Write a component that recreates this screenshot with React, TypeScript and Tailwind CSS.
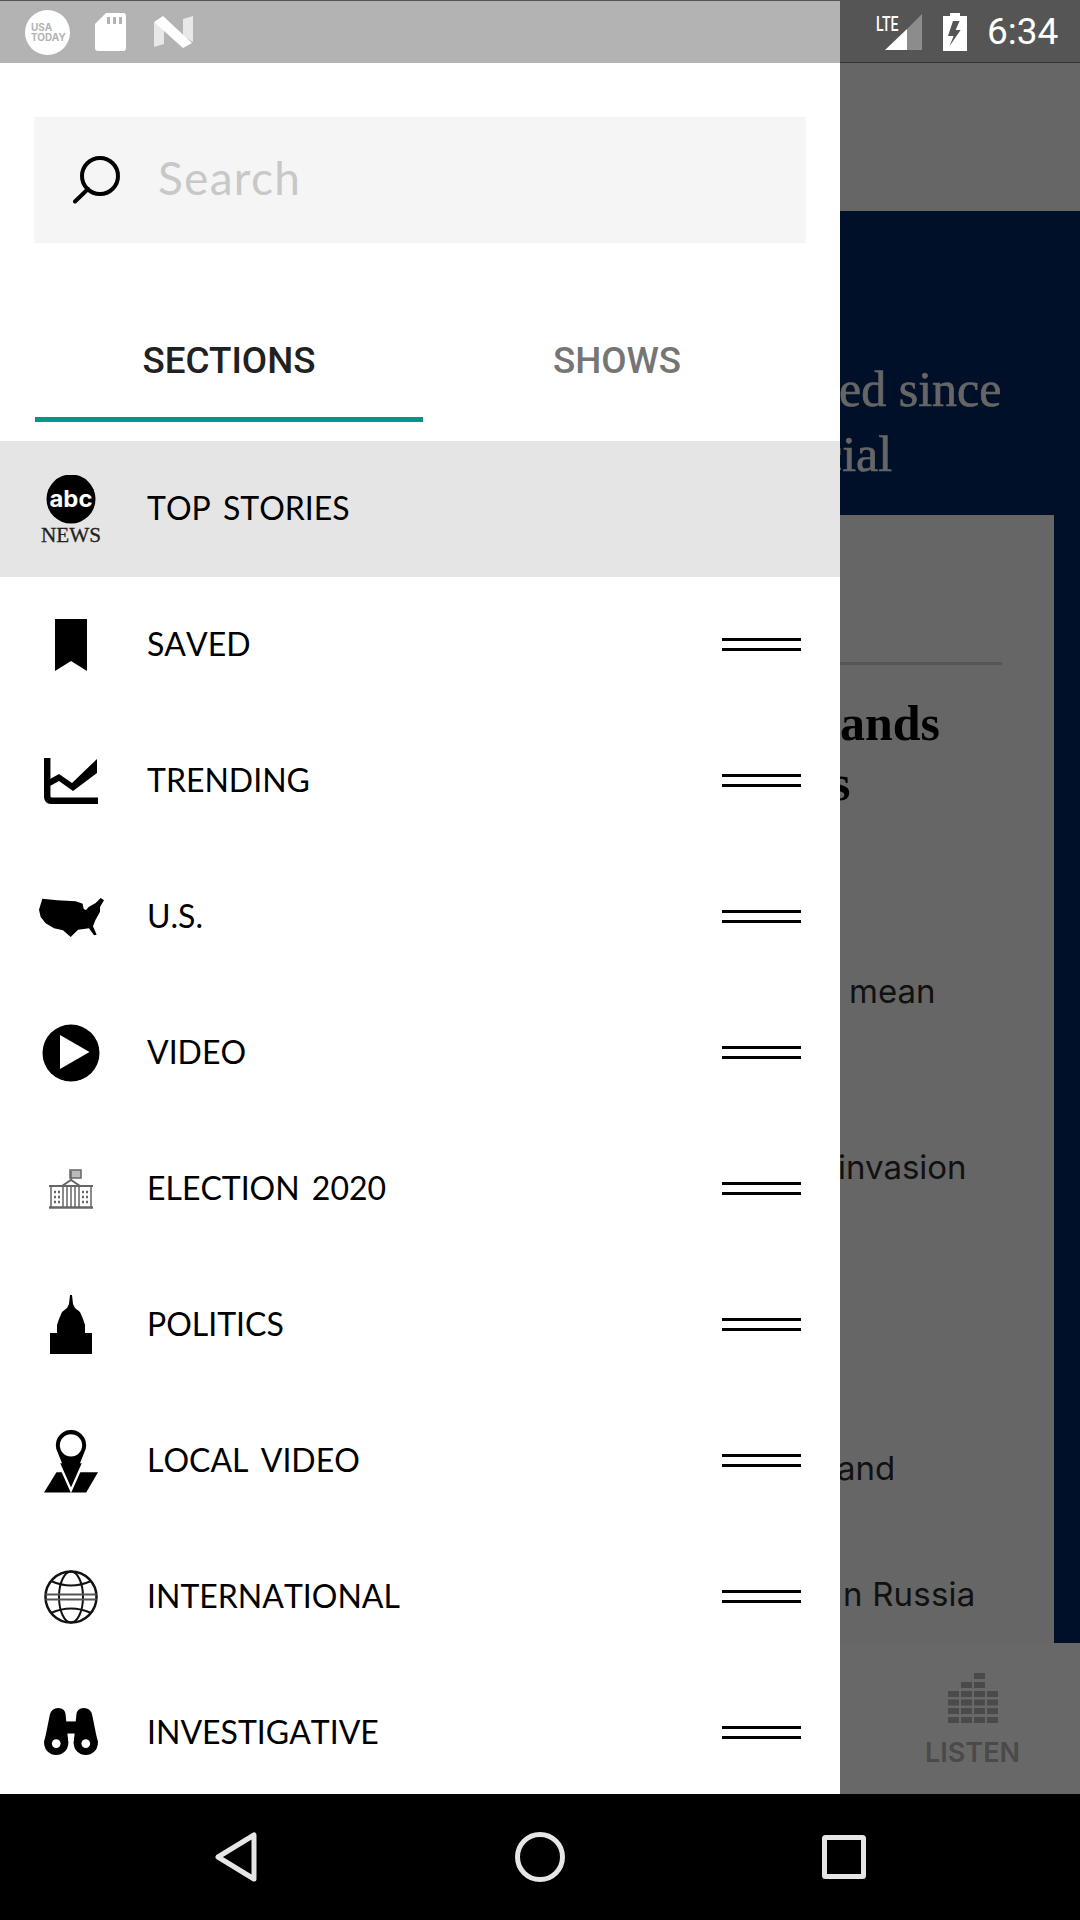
import React from 'react';

const AbcIcon = () => (
  <svg width="64" height="68" viewBox="0 0 64 68">
    <circle cx="32" cy="24" r="24.5" fill="#000" />
    <text x="32" y="32" textAnchor="middle" fontFamily="Inter, sans-serif" fontWeight="700" fontSize="23" fill="#fff" textLength="43" lengthAdjust="spacingAndGlyphs">abc</text>
    <text x="32" y="67" textAnchor="middle" fontFamily="'Liberation Serif', serif" fontSize="21" fill="#222" stroke="#222" strokeWidth="0.3" textLength="60" lengthAdjust="spacingAndGlyphs">NEWS</text>
  </svg>
);

const BookmarkIcon = () => (
  <svg width="32" height="52" viewBox="0 0 32 52">
    <path d="M0 0H32V52L16 42L0 52Z" fill="#000" />
  </svg>
);

const TrendIcon = () => (
  <svg width="54" height="46" viewBox="0 0 54 46">
    <path d="M3.2 0V38Q3.2 42.8 8 42.8H54" fill="none" stroke="#000" strokeWidth="6.5" />
    <path d="M6 21L15 16L28 25L53 1V15L29 33L15 23L6 28Z" fill="#000" />
  </svg>
);

const UsMapIcon = () => (
  <svg width="65" height="39" viewBox="55 55 195 117">
    <path d="M65 57L110 62L165 65L186 72L189 88L196 91L204 82L225 70L240 55L250 62L238 82L238 96L224 122L217 140L228 165L220 167L205 146L172 150L150 172L127 152L100 146L75 131L60 112L55 90Z" fill="#000" />
  </svg>
);

const PlayIcon = () => (
  <svg width="58" height="58" viewBox="0 0 58 58">
    <circle cx="29" cy="29" r="28.5" fill="#000" />
    <path d="M18 11L47.5 28L18 45Z" fill="#fff" />
  </svg>
);

const WhiteHouseIcon = () => (
  <svg width="46" height="40" viewBox="0 0 46 40" fill="none" stroke="#666">
    <rect x="22" y="1" width="11" height="8" fill="#bbb" stroke="#666" strokeWidth="1.5" />
    <path d="M23 2V12" strokeWidth="1.5" />
    <path d="M14 17L23 11L32 17" strokeWidth="2" />
    <path d="M1 17H45" strokeWidth="2" />
    <path d="M3 17V38M43 17V38M15 17V38M19 17V38M23 17V38M27 17V38M31 17V38" strokeWidth="1.5" />
    <path d="M1 38.5H45" strokeWidth="2.5" />
    <path d="M6 23H12M6 28H12M6 33H12M34 23H40M34 28H40M34 33H40" strokeWidth="2.5" strokeDasharray="2 2" />
  </svg>
);

const CapitolIcon = () => (
  <svg width="42" height="60" viewBox="0 0 42 60">
    <path d="M20 0H22L23 9L25 13L30 17L33 24L35 30L35 38H42V59H0V38H7V30L9 24L12 17L17 13L19 9Z" fill="#000" />
  </svg>
);

const PinIcon = () => (
  <svg width="54" height="63" viewBox="133 90 160 186">
    <path d="M133 275L170 215H293L258 275Z" fill="#000" />
    <path d="M176 185L213 268L250 185Z" fill="#000" stroke="#fff" strokeWidth="7" />
    <path d="M174 157A45 45 0 1 1 252 157L213 255Z" fill="#000" />
    <circle cx="213" cy="135" r="33" fill="#fff" />
  </svg>
);

const GlobeIcon = () => (
  <svg width="54" height="54" viewBox="0 0 54 54" fill="none" stroke="#111" strokeWidth="2">
    <circle cx="27" cy="27" r="25.5" strokeWidth="2.5" />
    <ellipse cx="27" cy="27" rx="12" ry="25.5" />
    <path d="M1.5 24.5H52.5M1.5 29.5H52.5" stroke="#555" />
    <path d="M7 11Q27 20 47 11M7 43Q27 34 47 43" />
  </svg>
);

const BinocularsIcon = () => (
  <svg className="-mt-[4px]" width="54" height="47" viewBox="133 925 160 140">
    <path d="M150 945Q155 925 175 925Q195 925 197 945L205 1029H133Z" fill="#000" />
    <path d="M276 945Q271 925 251 925Q231 925 229 945L221 1029H293Z" fill="#000" />
    <rect x="195" y="965" width="36" height="36" fill="#000" />
    <circle cx="169" cy="1029" r="36" fill="#000" />
    <circle cx="257" cy="1029" r="36" fill="#000" />
    <circle cx="169" cy="1031" r="13" fill="#fff" />
    <circle cx="257" cy="1031" r="13" fill="#fff" />
  </svg>
);

const DragHandle = () => (
  <div className="flex flex-col gap-[7px] w-[79px] -mt-[1px]">
    <div className="h-[3px] bg-black" />
    <div className="h-[3px] bg-black" />
  </div>
);

const sections = [
  { label: 'TOP STORIES', icon: <AbcIcon />, active: true },
  { label: 'SAVED', icon: <BookmarkIcon /> },
  { label: 'TRENDING', icon: <TrendIcon /> },
  { label: 'U.S.', icon: <UsMapIcon /> },
  { label: 'VIDEO', icon: <PlayIcon /> },
  { label: 'ELECTION 2020', icon: <WhiteHouseIcon /> },
  { label: 'POLITICS', icon: <CapitolIcon /> },
  { label: 'LOCAL VIDEO', icon: <PinIcon /> },
  { label: 'INTERNATIONAL', icon: <GlobeIcon /> },
  { label: 'INVESTIGATIVE', icon: <BinocularsIcon /> },
];

const StatusBar = () => (
  <div className="flex h-[63px] shrink-0 border-t border-[#555]">
    <div className="w-[840px] bg-[#b3b3b3] flex items-center pl-[25px]">
      <div className="w-[45px] h-[45px] rounded-full bg-white flex flex-col justify-center pl-[6px] font-['Inter',sans-serif] font-bold text-[10px] leading-[10px] text-[#b3b3b3]">
        <span>USA</span>
        <span>TODAY</span>
      </div>
      <svg className="ml-[25px]" width="31" height="38" viewBox="0 0 31 38">
        <path d="M11 0H28Q31 0 31 3V35Q31 38 28 38H3Q0 38 0 35V11Z" fill="#fff" />
        <path d="M12 4H15V11H12ZM18 4H21V11H18ZM24 4H27V11H24Z" fill="#b3b3b3" />
      </svg>
      <svg className="ml-[28px]" width="39" height="32" viewBox="0 0 39 32">
        <path d="M0 6V31L10 28V11Z" fill="#e8e8e8" />
        <path d="M29 3L39 0V26L29 20Z" fill="#e8e8e8" />
        <path d="M0 6L9 0L38 27L29 32Z" fill="#fff" />
      </svg>
    </div>
    <div className="flex-1 bg-[#555] border-b border-[#333] flex items-center pl-[36px] text-white">
      <div className="relative w-[46px] h-[38px]">
        <span className="absolute left-0 -top-[3px] font-['Roboto',sans-serif] font-medium text-[21px] leading-[28px] scale-x-[0.67] origin-left">LTE</span>
        <svg className="absolute left-0 top-0" width="46" height="38" viewBox="0 0 46 38">
          <path d="M46 1V37H31V16Z" fill="#8c8c8c" />
          <path d="M31 16V37H9Z" fill="#fff" />
        </svg>
      </div>
      <svg className="ml-[21px]" width="24" height="38" viewBox="0 0 24 38">
        <path d="M7 0H17V3H24V38H0V3H7Z" fill="#fff" />
        <path d="M10 8L5 23H10.6L6.6 33L17.6 17H12.6L16.6 8Z" fill="#555" />
      </svg>
      <span className="ml-[20px] font-['Roboto',sans-serif] text-[37px] leading-none">6:34</span>
    </div>
  </div>
);

const Drawer = () => (
  <div className="w-[840px] bg-white flex flex-col overflow-hidden">
    <div className="mt-[54px] mx-[34px] h-[126px] shrink-0 bg-[#f5f5f5] flex items-center pl-[39px]">
      <svg width="48" height="48" viewBox="0 0 48 48" fill="none" stroke="#000" strokeWidth="4" strokeLinecap="round">
        <circle cx="27" cy="20" r="18" />
        <path d="M15 33L2 45.5" />
      </svg>
      <span className="ml-[37px] -mt-[5px] font-['Lato',sans-serif] text-[46px] tracking-[1.3px] text-[#c8c8c8]">Search</span>
    </div>
    <div className="mt-[75px] shrink-0 flex pl-[35px] font-['Roboto',sans-serif] font-medium text-[36.75px] leading-[44px]">
      <div className="w-[388px] h-[104px] border-b-[5px] border-[#009688] text-[#212121] flex justify-center pt-[21px]">SECTIONS</div>
      <div className="w-[388px] h-[104px] text-[#757575] flex justify-center pt-[21px]">SHOWS</div>
    </div>
    <div className="mt-[19px] flex flex-col">
      {sections.map((s) => (
        <div key={s.label} className={`h-[136px] shrink-0 flex items-center ${s.active ? 'bg-[#e5e5e5]' : ''}`}>
          <div className="w-[142px] flex justify-center">{s.icon}</div>
          <span className="ml-[5px] -mt-[2px] flex-1 text-[32px] text-black font-['Lato',sans-serif] [font-kerning:none] [word-spacing:4px]">{s.label}</span>
          {!s.active && <div className="mr-[39px]"><DragHandle /></div>}
        </div>
      ))}
    </div>
  </div>
);

const Backdrop = () => (
  <div className="flex-1 flex flex-col overflow-hidden whitespace-nowrap bg-[#666]">
    <div className="h-[148px] shrink-0" />
    <div className="flex-1 bg-[#001029] flex flex-col">
      <div className="h-[304px] shrink-0 pt-[146px] font-['Liberation_Serif',serif] text-[50px] leading-[65px] text-[#666] [-webkit-text-stroke:0.7px_#666]">
        <div className="-ml-[1px]">ed since</div>
        <div className="-ml-[20px]">cial</div>
      </div>
      <div className="w-[214px] h-[1128px] shrink-0 bg-[#666]">
        <div className="h-[3px] w-[162px] mt-[147px] bg-[#555]" />
        <div className="mt-[28px] font-['Liberation_Serif',serif] font-bold text-[50px] leading-[60px] text-black">
          <div>ands</div>
          <div className="-ml-[9px]">s</div>
        </div>
        <div className="mt-[158px] font-['Inter',sans-serif] text-[33px] leading-[40px] text-[#111] pl-[9px]">mean</div>
        <div className="mt-[136px] font-['Inter',sans-serif] text-[33px] leading-[40px] text-[#111] -ml-[2px]">invasion</div>
        <div className="mt-[261px] font-['Inter',sans-serif] text-[33px] leading-[40px] text-[#111] -ml-[3px]">and</div>
        <div className="mt-[86px] font-['Inter',sans-serif] text-[33px] leading-[40px] text-[#111] pl-[3px] tracking-[0.2px]">n Russia</div>
      </div>
      <div className="flex-1 bg-[#686868] flex flex-col items-center pl-[25px] pt-[30px]">
        <svg width="50" height="50" viewBox="0 0 50 50" fill="#4a4a4a">
          <rect x="26" y="0" width="11" height="6" />
          <rect x="13" y="9" width="11" height="6" />
          <rect x="26" y="9" width="11" height="6" />
          {[0, 13, 26, 39].flatMap((x) =>
            [18, 26.5, 35, 44].map((y) => <rect key={`${x}-${y}`} x={x} y={y} width="11" height="6" />)
          )}
        </svg>
        <div className="mt-[16px] font-['Inter',sans-serif] font-semibold text-[27px] leading-none text-[#4a4a4a]">LISTEN</div>
      </div>
    </div>
  </div>
);

const NavBar = () => (
  <div className="h-[126px] shrink-0 bg-black flex items-center justify-between pl-[213px] pr-[214px]">
    <svg width="44" height="50" viewBox="0 0 44 50" fill="none" stroke="#e6e6e6" strokeWidth="5" strokeLinejoin="round">
      <path d="M41 3V47L5 25Z" />
    </svg>
    <svg width="50" height="50" viewBox="0 0 50 50" fill="none" stroke="#e6e6e6" strokeWidth="5">
      <circle cx="25" cy="25" r="22.5" />
    </svg>
    <svg width="44" height="44" viewBox="0 0 44 44" fill="none" stroke="#e6e6e6" strokeWidth="5" strokeLinejoin="round">
      <rect x="2.5" y="2.5" width="39" height="39" rx="1" />
    </svg>
  </div>
);

const App = () => {
  return (
    <div className="w-[1080px] h-[1920px] flex flex-col overflow-hidden">
      <StatusBar />
      <div className="flex-1 flex min-h-0">
        <Drawer />
        <Backdrop />
      </div>
      <NavBar />
    </div>
  );
};

export default App;
